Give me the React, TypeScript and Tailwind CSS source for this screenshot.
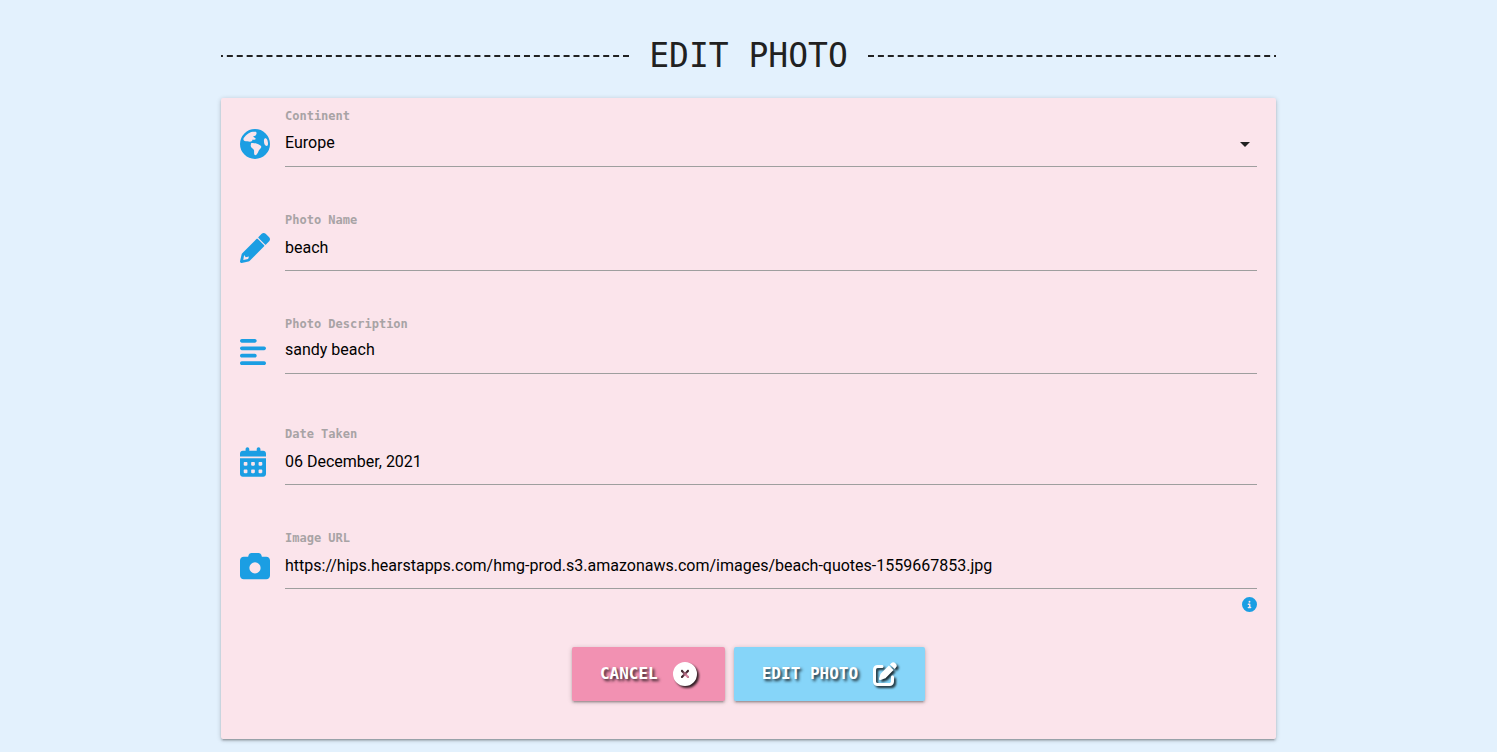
import type { ReactNode } from "react";
import {
  FaAlignLeft,
  FaCalendarDays,
  FaCamera,
  FaCircleInfo,
  FaCircleXmark,
  FaPenToSquare,
} from "react-icons/fa6";

const control =
  "block w-full appearance-none rounded-none border-b border-[#9e9e9e] bg-transparent font-['Roboto',sans-serif] text-base text-black outline-none";
const wideIcon = "h-[30px] w-[30px] text-[#1b9ee3]";
const narrowIcon = "h-[30px] w-[26px] text-[#1b9ee3]";
const buttonStyle =
  "flex h-[54px] items-center gap-[15px] rounded-xs px-7 text-base font-bold text-white shadow-[0_2px_2px_0_rgba(0,0,0,0.14),0_3px_1px_-2px_rgba(0,0,0,0.12),0_1px_5px_0_rgba(0,0,0,0.2)] [text-shadow:2px_2px_3px_rgba(0,0,0,0.8)]";
const buttonIcon = "size-6 drop-shadow-[2px_2px_1px_rgba(0,0,0,0.8)]";

function GlobeIcon() {
  return (
    <svg viewBox="0 0 90 90" className={wideIcon} fill="currentColor" fillRule="evenodd" aria-hidden="true">
      <path d="M45 0a45 45 0 1 1 0 90a45 45 0 1 1 0-90zM10 30C14 20 26 10 38 8L48 8C51 12 50 17 46 20L40 22C39 25 46 25 47 29C47 33 40 31 36 32C39 35 35 38 30 38L22 37C16 37 10 36 10 30zM33 43C38 40 46 43 51 44C56 46 63 48 64 53C64 58 58 60 56 65C54 70 51 78 46 79C41 78 43 70 42 64C40 58 33 57 32 51zM72 32C74 26 79 26 82 33C85 42 85 50 80 51C74 50 71 42 72 32z" />
    </svg>
  );
}

function PencilIcon() {
  return (
    <svg viewBox="0 0 512 512" className={wideIcon} fill="currentColor" fillRule="evenodd" aria-hidden="true">
      <path d="M497.9 142.1l-54 54c-4.7 4.7-12.3 4.7-17 0l-111-111c-4.7-4.7-4.7-12.3 0-17l54-54c18.7-18.7 49.1-18.7 67.9 0l60.1 60.1c18.8 18.7 18.8 49.1 0 67.9zM284.2 99.8L39 345c-6 6-10 13-12 22L.4 483.9c-2.9 16.4 11.4 30.6 27.8 27.8L145 485c9-2 16-6 22-12L412.3 227.8c4.7-4.7 4.7-12.3 0-17l-111-111c-4.8-4.7-12.4-4.7-17.1 0zM70 376L98 413L154 400L138 442L56 462z" />
    </svg>
  );
}

type FieldProps = { id: string; label: string; icon: ReactNode; children: ReactNode };

function Field({ id, label, icon, children }: FieldProps) {
  return (
    <div className="flex">
      <div className="w-[45px] shrink-0 pt-[21px]">{icon}</div>
      <div className="min-w-0 grow">
        <label htmlFor={id} className="block text-xs leading-4 font-bold text-[#a8a3a5]">
          {label}
        </label>
        {children}
      </div>
    </div>
  );
}

export default function App() {
  return (
    <div className="min-h-screen bg-[#e3f1fd] px-4 pb-3 font-['DejaVu_Sans_Mono',monospace]">
      <main className="mx-auto w-full max-w-[1055px]">
        <header className="flex items-center gap-5 pt-[33px]">
          <div className="flex grow basis-0 justify-end overflow-hidden">
            <div className="w-[521px] shrink-0 border-t-2 border-dashed border-[#212121]" />
          </div>
          <h1 className="text-[33px] leading-[46px] text-[#212121] uppercase">Edit Photo</h1>
          <div className="flex grow basis-0 overflow-hidden">
            <div className="w-[521px] shrink-0 border-t-2 border-dashed border-[#212121]" />
          </div>
        </header>

        <form
          className="mt-[19px] rounded-xs bg-[#fbe4eb] px-[19px] pt-[10px] pb-[38px] shadow-[0_2px_2px_0_rgba(0,0,0,0.14),0_3px_1px_-2px_rgba(0,0,0,0.12),0_1px_5px_0_rgba(0,0,0,0.2)]"
          onSubmit={(event) => event.preventDefault()}
        >
          <div className="flex flex-col gap-[45px]">
            <Field id="continent" label="Continent" icon={<GlobeIcon />}>
              <div className="relative">
                <select id="continent" defaultValue="Europe" className={`${control} h-[43px] pb-1`}>
                  <option>Africa</option>
                  <option>Asia</option>
                  <option>Europe</option>
                  <option>North America</option>
                  <option>South America</option>
                </select>
                <svg
                  viewBox="0 0 10 5"
                  className="pointer-events-none absolute top-[18px] right-[7px] h-[5px] w-[10px] fill-[#212121]"
                >
                  <path d="M0 0h10L5 5z" />
                </svg>
              </div>
            </Field>
            <Field id="name" label="Photo Name" icon={<PencilIcon />}>
              <input id="name" type="text" defaultValue="beach" className={`${control} h-[43px] pb-1`} />
            </Field>
            <Field id="description" label="Photo Description" icon={<FaAlignLeft className={narrowIcon} />}>
              <textarea
                id="description"
                defaultValue="sandy beach"
                className={`${control} mb-[7px] h-[42px] resize-none overflow-hidden pt-[6px] leading-6`}
              />
            </Field>
            <Field id="date" label="Date Taken" icon={<FaCalendarDays className={narrowIcon} />}>
              <input id="date" type="text" defaultValue="06 December, 2021" className={`${control} h-[43px] pb-1`} />
            </Field>
            <Field id="image" label="Image URL" icon={<FaCamera className={wideIcon} />}>
              <input
                id="image"
                type="url"
                defaultValue="https://hips.hearstapps.com/hmg-prod.s3.amazonaws.com/images/beach-quotes-1559667853.jpg"
                className={`${control} h-[43px] pb-1`}
              />
            </Field>
          </div>

          <div className="flex justify-end pt-2">
            <button type="button" aria-label="Image URL help">
              <FaCircleInfo className="size-[15px] text-[#1b9ee3]" />
            </button>
          </div>

          <div className="flex justify-center gap-[9px] pt-[35px]">
            <button type="button" className={`${buttonStyle} bg-[#f291b2]`}>
              CANCEL
              <FaCircleXmark className={buttonIcon} />
            </button>
            <button type="submit" className={`${buttonStyle} bg-[#86d5f9]`}>
              EDIT PHOTO
              <FaPenToSquare className={buttonIcon} />
            </button>
          </div>
        </form>
      </main>
    </div>
  );
}
